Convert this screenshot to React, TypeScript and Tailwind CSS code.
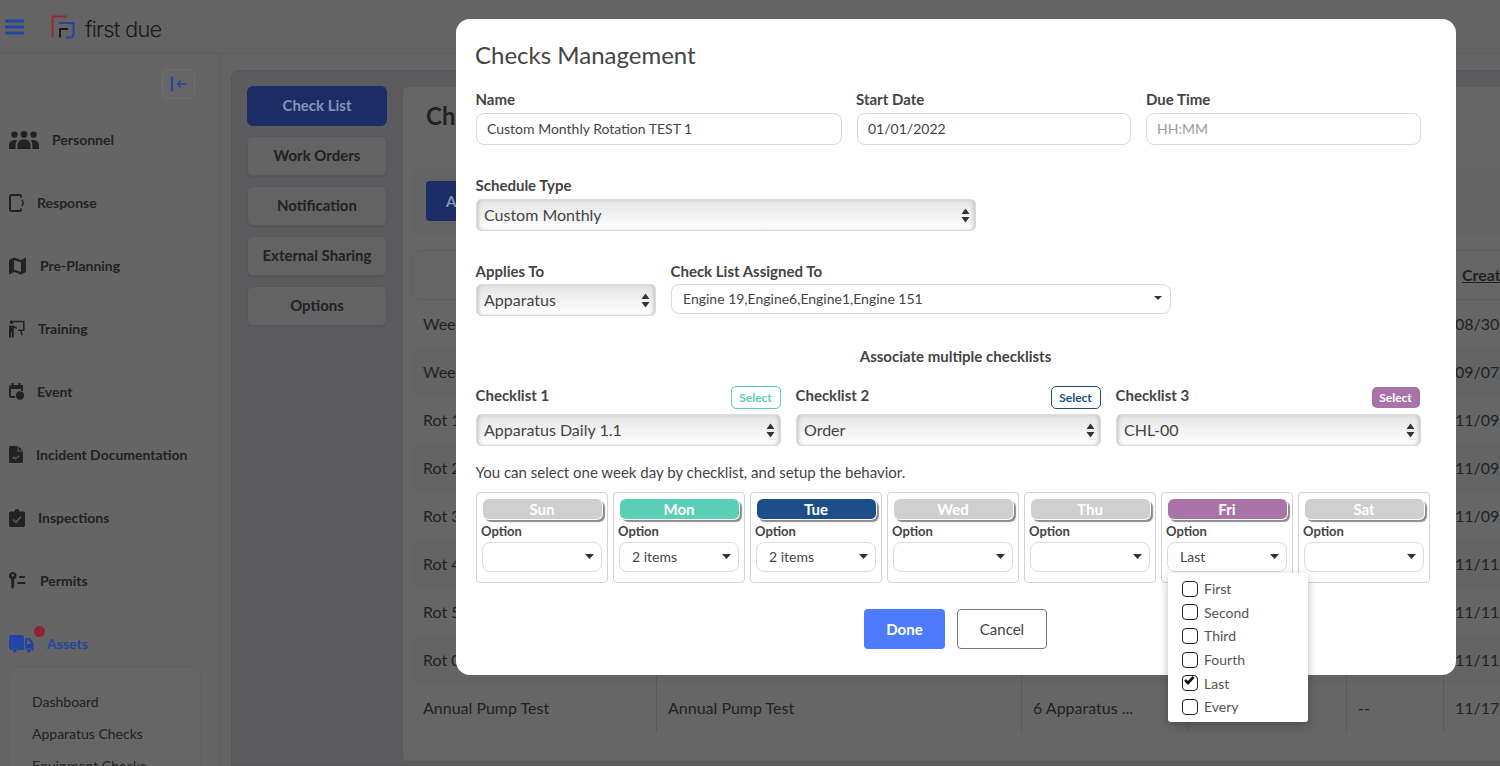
import React from "react";

const SortArrows = () => (
  <svg width="9" height="15" viewBox="0 0 9 15" className="shrink-0">
    <path d="M4.5 0.5L8.5 6H0.5Z M4.5 14.5L0.5 9H8.5Z" fill="#333" />
  </svg>
);

const Caret = () => (
  <svg width="9" height="5" viewBox="0 0 9 5" className="shrink-0">
    <path d="M0 0H9L4.5 5Z" fill="#333" />
  </svg>
);

const NativeSelect = ({ value, className }: { value: string; className: string }) => (
  <div
    className={`h-8 flex items-center justify-between pl-[7px] pr-[5px] rounded-[5px] border border-[#dcdcdc] bg-gradient-to-b from-[#e4e4e4] via-[#f2f2f2] to-white shadow-[inset_3px_0_4px_-2px_#bbb,inset_-3px_0_4px_-2px_#bbb] text-[16px] text-[#444] ${className}`}
  >
    <span>{value}</span>
    <SortArrows />
  </div>
);

const TextBox = ({ value, muted, className }: { value: string; muted?: boolean; className: string }) => (
  <div
    className={`h-8 flex items-center px-[10px] pb-[2px] rounded-[8px] border border-[#d9d9d9] bg-white text-[14px] ${muted ? "text-[#9a9a9a]" : "text-[#444]"} ${className}`}
  >
    {value}
  </div>
);

const nav = [
  {
    label: "Personnel",
    gap: "w-[43px]",
    icon: (
      <svg width="30" height="18" viewBox="0 0 30 18" fill="currentColor">
        <circle cx="5.5" cy="3.6" r="3.2" />
        <circle cx="15" cy="3.4" r="3.4" />
        <circle cx="24.5" cy="3.6" r="3.2" />
        <path d="M8.5 18V14C8.5 10.5 11 8.5 15 8.5C19 8.5 21.5 10.5 21.5 14V18Z" />
        <path d="M0 18V14C0 11 2.5 8.6 6.5 9C7.5 9.2 8 9.5 8.2 9.8C7 11 6.6 12.5 6.6 14.5V18Z" />
        <path d="M30 18V14C30 11 27.5 8.6 23.5 9C22.5 9.2 22 9.5 21.8 9.8C23 11 23.4 12.5 23.4 14.5V18Z" />
      </svg>
    ),
  },
  {
    label: "Response",
    gap: "w-[28px]",
    icon: (
      <svg width="15" height="18" viewBox="0 0 15 18" fill="none">
        <path d="M12 3.5V2.5C12 1.7 11.3 1 10.5 1H2.5C1.7 1 1 1.7 1 2.5V15.5C1 16.3 1.7 17 2.5 17H10.5C11.3 17 12 16.3 12 15.5V14.5" stroke="currentColor" strokeWidth="2" />
        <path d="M13 6C14.4 8 14.4 10 13 12" stroke="currentColor" strokeWidth="1.6" />
      </svg>
    ),
  },
  {
    label: "Pre-Planning",
    gap: "w-[31px]",
    icon: (
      <svg width="17" height="18" viewBox="0 0 17 18" fill="currentColor">
        <path d="M0 3L5 0.5V15L0 17.5Z" />
        <path d="M12 3L17 0.5V15L12 17.5Z" />
        <path d="M5 0.5L12 3V5.5L5 3Z" />
        <path d="M5 12.5L12 15V17.5L5 15Z" />
      </svg>
    ),
  },
  {
    label: "Training",
    gap: "w-[29px]",
    icon: (
      <svg width="16" height="18" viewBox="0 0 16 18" fill="currentColor">
        <circle cx="2.6" cy="2.2" r="1.9" />
        <path d="M0 5.5H4.5L8 7.5V9L4.8 7.8V17.5H3V12H2.2V17.5H0Z" />
        <path d="M4.5 0.8H15.5V11H12.6L14 15.5H12.6L11 11H9V9.6H14V2.2H4.5Z" />
      </svg>
    ),
  },
  {
    label: "Event",
    gap: "w-[28px]",
    icon: (
      <svg width="16" height="17" viewBox="0 0 16 17" fill="currentColor">
        <path d="M2.5 0H4.5V2H9.5V0H11.5V2H14V8H12V6H2V13H6V15H2C0.9 15 0 14.1 0 13V4C0 2.9 0.9 2 2 2H2.5Z" />
        <circle cx="11" cy="12.5" r="4.2" />
      </svg>
    ),
  },
  {
    label: "Incident Documentation",
    gap: "w-[27px]",
    icon: (
      <svg width="14" height="17" viewBox="0 0 14 17">
        <path d="M1.5 0H8.5V5.5H14V15.5C14 16.3 13.3 17 12.5 17H1.5C0.7 17 0 16.3 0 15.5V1.5C0 0.7 0.7 0 1.5 0Z" fill="currentColor" />
        <path d="M9.5 0.3L13.8 4.5H9.5Z" fill="currentColor" />
        <path d="M3.5 12.5L5.2 11.2L6.5 13L10.5 9.8" stroke="#e8e8e8" strokeWidth="1.2" fill="none" />
      </svg>
    ),
  },
  {
    label: "Inspections",
    gap: "w-[29px]",
    icon: (
      <svg width="16" height="18" viewBox="0 0 16 18">
        <path d="M5.5 2.5C5.5 1.2 6.5 0 8 0C9.5 0 10.5 1.2 10.5 2.5H14.5C15.3 2.5 16 3.2 16 4V16.5C16 17.3 15.3 18 14.5 18H1.5C0.7 18 0 17.3 0 16.5V4C0 3.2 0.7 2.5 1.5 2.5Z" fill="currentColor" />
        <path d="M4 10.5L7 13.2L12 7.8" stroke="#f0f0f0" strokeWidth="1.5" fill="none" />
      </svg>
    ),
  },
  {
    label: "Permits",
    gap: "w-[31px]",
    icon: (
      <svg width="17" height="17" viewBox="0 0 17 17" fill="currentColor">
        <path d="M3.8 0A3.8 3.8 0 0 1 5.2 7.3V14.5L3.7 17L2.3 15.5V7.3A3.8 3.8 0 0 1 3.8 0ZM3.8 2A1.2 1.2 0 1 0 3.8 4.4A1.2 1.2 0 1 0 3.8 2Z" />
        <rect x="10" y="4" width="6" height="2" rx="0.6" />
        <rect x="8.5" y="10" width="8" height="2" rx="0.6" />
      </svg>
    ),
  },
];

const Sidebar = () => (
  <aside className="w-[218px] shrink-0 bg-[#fcfcfc] shadow-[2px_0_6px_rgba(0,0,0,0.06)] flex flex-col">
    <div className="flex justify-end pt-[15px] pr-[23px] h-[54px] shrink-0">
      <div className="relative z-20 w-[33px] h-[30px] rounded-[7px] border border-[#707070] bg-[#666] flex items-center justify-center text-[#2444a4]">
        <svg width="18" height="18" viewBox="0 0 18 18" fill="none" stroke="currentColor">
          <path d="M2 1.5V16.5" strokeWidth="2" />
          <path d="M16.5 9H7.5M11 5.5L7.5 9L11 12.5" strokeWidth="1.3" />
        </svg>
      </div>
    </div>
    {nav.map((n) => (
      <div key={n.label} className="h-[63px] flex items-center pl-[9px] text-[14px] font-bold text-[#555] shrink-0">
        <div className={`${n.gap} shrink-0 flex items-center`}>{n.icon}</div>
        <span>{n.label}</span>
      </div>
    ))}
    <div className="relative z-20 h-[63px] flex items-center pl-[9px] text-[14px] font-bold text-[#2444a4] shrink-0">
      <div className="w-[38px] shrink-0 relative flex items-center">
        <svg width="25" height="18" viewBox="0 0 25 18" fill="currentColor">
          <path d="M2 0H13C14 0 15 1 15 2V15H8.5A3 3 0 0 0 3 15H2C1 15 0 14 0 13V2C0 1 1 0 2 0Z" />
          <path d="M16 3H20C21 3 21.5 3.5 22 4L24.5 8V14C24.5 15 24 16 23 16A3.4 3.4 0 0 0 16.5 15H16ZM18 5.5V9H22L20 5.5Z" />
          <circle cx="5.8" cy="15.5" r="2" />
          <circle cx="19.8" cy="15.5" r="2" />
        </svg>
        <span className="absolute left-[25px] -top-[9px] w-[11px] h-[11px] rounded-full bg-[#8f2233]" />
      </div>
      <span>Assets</span>
    </div>
    <div className="ml-[9px] w-[192px] mt-[-9px] bg-white rounded-t-[8px] border border-[#f3f3f3] pl-[22px] pt-[25px] text-[14px] text-[#555] flex flex-col gap-[12px] leading-[20px]">
      <span>Dashboard</span>
      <span>Apparatus Checks</span>
      <span>Equipment Checks</span>
    </div>
  </aside>
);

const tabs = ["Work Orders", "Notification", "External Sharing", "Options"];

const rows: [string, string, string, string, string][] = [
  ["Wee", "", "", "", "08/30/"],
  ["Wee", "", "", "", "09/07/"],
  ["Rot 1", "", "", "", "11/09/"],
  ["Rot 2", "", "", "", "11/09/"],
  ["Rot 3", "", "", "", "11/09/"],
  ["Rot 4", "", "", "", "11/11/"],
  ["Rot 5", "", "", "", "11/11/"],
  ["Rot 0", "", "", "", "11/11/"],
  ["Annual Pump Test", "Annual Pump Test", "6 Apparatus ...", "--", "11/17/"],
];

const Background = () => (
  <div className="h-full flex flex-col bg-[#fafafa]">
    <header className="h-[54px] shrink-0 bg-[#fafafa] border-b border-[#f0f0f0] flex items-center pl-[5px]">
      <svg width="20" height="16" viewBox="0 0 20 16" fill="#2444a4" className="relative z-20">
        <rect x="0" y="0.5" width="19" height="3" rx="1.2" />
        <rect x="0" y="6.5" width="19" height="3" rx="1.2" />
        <rect x="0" y="12.5" width="19" height="3" rx="1.2" />
      </svg>
      <svg width="25" height="24" viewBox="0 0 25 24" fill="none" className="ml-[26px] relative z-20">
        <path d="M1.5 23V1.5H16" stroke="#962b37" strokeWidth="2" />
        <path d="M8 8H22.5V19C22.5 21 21 22.5 19 22.5H15" stroke="#2444a4" strokeWidth="2" />
        <path d="M9 22.5V14H17" stroke="#1b1b1b" strokeWidth="2" />
      </svg>
      <span className="ml-[9px] pt-[6px] text-[22px] font-light text-[#444] tracking-[-0.8px] font-['Inter',sans-serif]">first due</span>
    </header>
    <div className="flex-1 flex min-h-0">
      <Sidebar />
      <main className="flex-1 pl-[13px] pt-[16px] min-w-0 overflow-hidden">
        <div className="h-full w-[1300px] bg-[#e5e7ea] rounded-tl-[8px] border border-[#d6d6d6] p-[15px] flex gap-[15px]">
          <div className="w-[140px] shrink-0 flex flex-col gap-[10px]">
            <div className="h-10 pb-[2px] rounded-[6px] bg-[#4670ff] flex items-center justify-center">
              <span className="relative z-20 text-[#8593b8] font-bold text-[15px]">Check List</span>
            </div>
            {tabs.map((t) => (
              <div key={t} className="h-10 pb-[2px] rounded-[6px] bg-[#f7f7f7] border border-[#dddddd] shadow-[0_1px_2px_rgba(0,0,0,0.1)] text-[#555] font-bold text-[15px] flex items-center justify-center">
                {t}
              </div>
            ))}
          </div>
          <div className="w-[1200px] h-[676px] shrink-0 bg-white rounded-[6px] border border-[#e4e4e4] pl-[8px] overflow-hidden">
            <div className="text-[24px] font-bold text-[#555] pl-[15px] pt-[11px] leading-[36px]">Checks</div>
            <div className="mt-[33px] h-[68px] rounded-l-[10px] bg-[#fafafa] flex items-center pl-[15px]">
              <div className="w-[120px] h-10 rounded-[4px] bg-[#4670ff] pl-[20px] flex items-center">
                <span className="relative z-20 text-[#8593b8] font-bold text-[15px]">Add</span>
              </div>
            </div>
            <div className="mt-[15px] h-[50px] rounded-l-[10px] border border-[#ececec] flex items-center pl-[1050px]">
              <span className="text-[16px] font-bold underline text-[#555] whitespace-nowrap">Created</span>
            </div>
            {rows.map((r, i) => (
              <div
                key={i}
                className={`h-12 grid grid-cols-[245px_365px_166px_159px_97px_1fr] items-center text-[16px] text-[#555] whitespace-nowrap ${i % 2 === 1 ? "bg-[#f9f9f9]" : "bg-white"}`}
              >
                <span className="pl-3 h-full flex items-center">{r[0]}</span>
                <span className="pl-[11px] h-full flex items-center border-l border-[#e0e0e0]">{r[1]}</span>
                <span className="pl-[11px] h-full flex items-center border-l border-[#e0e0e0]">{r[2]}</span>
                <span className="h-full border-l border-[#e0e0e0]" />
                <span className="pl-[11px] h-full flex items-center border-l border-[#e0e0e0]">{r[3]}</span>
                <span className="pl-[11px] h-full flex items-center border-l border-[#e0e0e0]">{r[4]}</span>
              </div>
            ))}
          </div>
        </div>
      </main>
    </div>
  </div>
);

const Label = ({ children, className = "" }: { children: React.ReactNode; className?: string }) => (
  <div className={`text-[15px] leading-[18px] font-bold text-[#444] ${className}`}>{children}</div>
);

const checklists = [
  { label: "Checklist 1", value: "Apparatus Daily 1.1", btn: "w-[50px] h-[23px] border border-[#5acfb5] text-[#5acfb5] bg-white" },
  { label: "Checklist 2", value: "Order", btn: "w-[50px] h-[23px] border border-[#1c4f87] text-[#1c4f87] bg-white" },
  { label: "Checklist 3", value: "CHL-00", btn: "w-[48px] mr-[1px] bg-[#a874a8] text-white h-[21px] mt-[1px]" },
];

const days = [
  { d: "Sun", pill: "bg-[#cfcfcf]", val: "" },
  { d: "Mon", pill: "bg-[#5acfb5]", val: "2 items" },
  { d: "Tue", pill: "bg-[#1c4f87]", val: "2 items" },
  { d: "Wed", pill: "bg-[#cfcfcf]", val: "" },
  { d: "Thu", pill: "bg-[#cfcfcf]", val: "" },
  { d: "Fri", pill: "bg-[#a874a8]", val: "Last" },
  { d: "Sat", pill: "bg-[#cfcfcf]", val: "" },
];

const options = ["First", "Second", "Third", "Fourth", "Last", "Every"];

const Dropdown = () => (
  <div className="absolute left-[6px] top-[80px] w-[140px] h-[149px] bg-white rounded-[3px] shadow-[0_3px_10px_rgba(0,0,0,0.28)] pl-[14px] pt-[4px] z-10">
    {options.map((o) => (
      <div key={o} className="h-[23.6px] flex items-center gap-[6px] text-[14px] text-[#555]">
        <span className="w-4 h-4 rounded-[4px] border border-[#222] bg-white flex items-start justify-start">
          {o === "Last" && (
            <svg width="11" height="10" viewBox="0 0 11 10" className="ml-[1px]">
              <path d="M1 4L4 7L9.5 1" stroke="#111" strokeWidth="2.6" fill="none" />
            </svg>
          )}
        </span>
        <span>{o}</span>
      </div>
    ))}
  </div>
);

const Modal = () => (
  <div className="absolute left-[456px] top-[19px] w-[1000px] h-[656px] bg-white rounded-[14px] pl-[20px] pt-[20px] z-20 font-['Lato',sans-serif]">
    <h1 className="text-[24px] leading-[32px] text-[#444] font-normal -ml-[1px]">Checks Management</h1>

    <div className="flex gap-[15px] mt-[19px]">
      <div className="w-[366px]">
        <Label className="-ml-[0.5px]">Name</Label>
        <TextBox value="Custom Monthly Rotation TEST 1" className="w-full mt-[5px]" />
      </div>
      <div className="w-[274px]">
        <Label className="-ml-[1px]">Start Date</Label>
        <TextBox value="01/01/2022" className="w-full mt-[5px]" />
      </div>
      <div className="w-[275px]">
        <Label>Due Time</Label>
        <TextBox value="HH:MM" muted className="w-full mt-[5px]" />
      </div>
    </div>

    <Label className="mt-[31px] -ml-[0.5px]">Schedule Type</Label>
    <NativeSelect value="Custom Monthly" className="w-[500px] mt-[5px]" />

    <div className="flex gap-[15px] mt-[31px]">
      <div className="w-[180px]">
        <Label className="-ml-[0.5px]">Applies To</Label>
        <NativeSelect value="Apparatus" className="w-full mt-[4px]" />
      </div>
      <div className="w-[500px]">
        <Label className="-ml-[0.5px]">Check List Assigned To</Label>
        <div className="h-[30px] mt-[4px] pb-[2px] flex items-center justify-between pl-[11px] pr-[8px] rounded-[8px] border border-[#d9d9d9] text-[14px] text-[#444]">
          <span>Engine 19,Engine6,Engine1,Engine 151</span>
          <svg width="8" height="4" viewBox="0 0 8 4"><path d="M0 0H8L4 4Z" fill="#333" /></svg>
        </div>
      </div>
    </div>

    <div className="w-[960px] text-center text-[15px] leading-[18px] font-bold text-[#444] mt-[31px] pr-[1px]">Associate multiple checklists</div>

    <div className="flex gap-[15px] mt-[21px]">
      {checklists.map((c) => (
        <div key={c.label} className="w-[305px]">
          <div className="flex justify-between h-[24px]">
            <Label className="-ml-[0.5px]">{c.label}</Label>
            <div className={`rounded-[5px] text-[12px] font-bold pr-[1px] flex items-center justify-center ${c.btn}`}>Select</div>
          </div>
          <NativeSelect value={c.value} className="w-full mt-[4px]" />
        </div>
      ))}
    </div>

    <div className="text-[15px] leading-[18px] text-[#444] mt-[17px] -ml-[0.5px]">You can select one week day by checklist, and setup the behavior.</div>

    <div className="flex gap-[5px] mt-[11px]">
      {days.map((x) => (
        <div key={x.d} className="relative w-[132px] h-[91px] rounded-[4px] border border-[#d4d4d4] pt-[6px] pl-[4px]">
          <div className={`w-[120px] h-[21px] ml-[2px] rounded-[6px] ${x.pill} shadow-[2px_2px_1px_rgba(0,0,0,0.45)] border-b border-r border-white text-white font-bold text-[15px] leading-[20px] text-center pr-[1px]`}>
            {x.d}
          </div>
          <div className="text-[13px] leading-[16px] font-bold text-[#444] mt-[3px]">Option</div>
          <div className="w-[120px] h-[30px] mt-[3px] ml-[1px] pb-[1px] rounded-[8px] border border-[#dcdcdc] flex items-center justify-between pl-[12px] pr-[7px] text-[14px] text-[#444]">
            <span>{x.val}</span>
            <Caret />
          </div>
          {x.d === "Fri" && <Dropdown />}
        </div>
      ))}
    </div>

    <div className="w-[960px] flex justify-center gap-[12px] mt-[26px] pr-[1px]">
      <div className="w-[81px] h-10 rounded-[4px] bg-[#4d7cfe] text-white font-bold text-[15px] flex items-center justify-center">Done</div>
      <div className="w-[90px] h-10 rounded-[4px] border border-[#777] text-[#444] text-[15px] flex items-center justify-center">Cancel</div>
    </div>
  </div>
);

export default function App() {
  return (
    <div className="relative w-[1500px] h-[766px] overflow-hidden font-['Lato',sans-serif]">
      <Background />
      <div className="absolute inset-0 bg-black/60 z-10" />
      <Modal />
    </div>
  );
}
